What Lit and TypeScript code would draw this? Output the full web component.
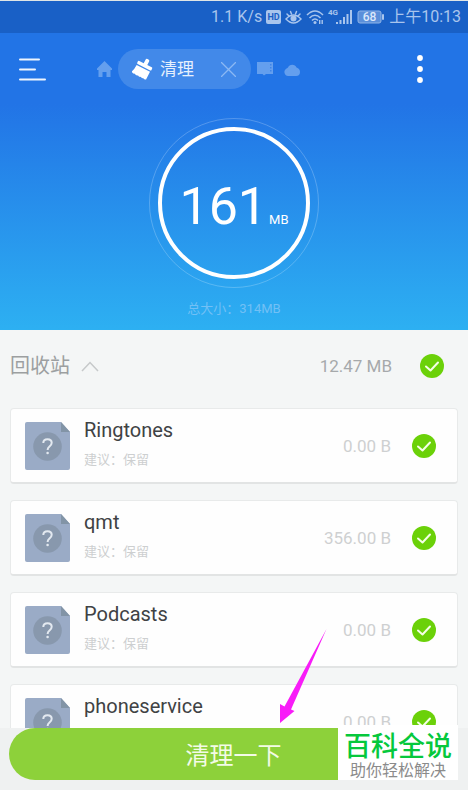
import { LitElement, html, css } from "lit";
import { customElement, property, state } from "lit/decorators.js";

const FONT = css`Roboto, "Noto Sans CJK SC", sans-serif`;

@customElement("check-toggle")
class CheckToggle extends LitElement {
  @property() label = "";

  static styles = css`
    :host {
      display: block;
    }
    .toggle {
      display: grid;
      width: 24px;
      height: 24px;
    }
    .box,
    .tick {
      grid-area: 1 / 1;
      width: 24px;
      height: 24px;
      margin: 0;
    }
    .box {
      appearance: none;
      border-radius: 50%;
      background: #c9cdcf;
    }
    .box:checked {
      background: #6bd109;
    }
    .tick {
      pointer-events: none;
    }
  `;

  render() {
    return html`<label class="toggle">
      <input class="box" type="checkbox" checked aria-label=${this.label} />
      <svg class="tick" viewBox="0 0 24 24" fill="none" stroke="#f4ffe6" stroke-width="2" stroke-linecap="round" stroke-linejoin="round">
        <path d="M6 12.5 L10.5 16.5 L18 8.5" />
      </svg>
    </label>`;
  }
}

@customElement("status-bar")
class StatusBar extends LitElement {
  static styles = css`
    :host {
      display: flex;
      align-items: center;
      justify-content: flex-end;
      gap: 4px;
      height: 32px;
      padding-right: 7px;
      border-top: 1px solid #dfe5e6;
      background: #1960c6;
      color: #a9c5ed;
      font: 16px/20px ${FONT};
      white-space: nowrap;
    }
    .icon {
      display: block;
      flex: none;
      fill: currentColor;
      font: bold 9px/10px ${FONT};
    }
    .load {
      font-size: 12px;
      font-weight: 500;
    }
    .small {
      font-size: 8px;
    }
  `;

  render() {
    return html`
      <span>1.1 K/s</span>
      <svg class="icon" width="15" height="16" viewBox="0 0 15 16">
        <rect y="1" width="15" height="14" rx="2" />
        <text x="7.5" y="11" text-anchor="middle" fill="#1960c6">HD</text>
      </svg>
      <svg class="icon" width="17" height="16" viewBox="0 0 17 16">
        <g fill="none" stroke="currentColor" stroke-width="1.5" stroke-linecap="round">
          <path d="M1 10 Q8.500 2 16 10 Q8.500 18 1 10Z" />
          <path d="M2 5 L4 7 M5.500 2.500 L6.500 5 M11.500 2.500 L10.500 5 M15 5 L13 7" />
        </g>
        <circle cx="8.500" cy="9.500" r="3" />
      </svg>
      <svg class="icon" width="18" height="16" viewBox="0 0 18 16">
        <g fill="none" stroke="currentColor" stroke-width="1.600">
          <path d="M1 6 Q9 -2 17 6" />
          <path d="M3.500 9 Q9 3.500 14.500 9" />
          <path d="M6 11.500 Q9 8.500 12 11.500" />
        </g>
        <circle cx="9" cy="13.500" r="1.500" />
        <path d="M13 15V11h1.400v4zM15.500 15V11h1.400v4z" />
      </svg>
      <svg class="icon" width="25" height="18" viewBox="0 0 25 18">
        <text class="small" x="0" y="7">4G</text>
        <path d="M8 14h2v2h-2zM11.500 12h2v4h-2zM15 9h2v7h-2zM18.500 6h2v10h-2zM22 2h2v14h-2z" />
      </svg>
      <svg class="icon" width="28" height="14" viewBox="0 0 28 14">
        <rect x="1" y="1" width="23" height="12" rx="2" fill="#5b8fda" stroke="#8fb4e8" />
        <rect x="25" y="4" width="2" height="6" rx="1" />
        <text class="load" x="12.500" y="11.300" text-anchor="middle" fill="#dce8fa">68</text>
      </svg>
      <span>上午10:13</span>
    `;
  }
}

@customElement("trash-item")
class TrashItem extends LitElement {
  @property() name = "";
  @property() size = "";

  static styles = css`
    :host {
      display: flex;
      align-items: center;
      box-sizing: border-box;
      height: 76px;
      flex: none;
      padding: 0 21px 0 14px;
      border: 1px solid #e8eaea;
      border-bottom: 2px solid #e2e4e4;
      border-radius: 4px;
      background: #fefefe;
      font-family: ${FONT};
    }
    .file {
      flex: none;
      display: block;
    }
    .info {
      flex: 1;
      min-width: 0;
      margin-left: 14px;
    }
    .name {
      margin: 0;
      color: #404244;
      font-size: 20px;
      font-weight: 400;
      line-height: 24px;
    }
    .advice {
      margin: 8px 0 4px;
      color: #cdcfd0;
      font-size: 13px;
      line-height: 20px;
    }
    .size {
      margin-right: 21px;
      color: #ced0d1;
      font-size: 17px;
      line-height: 24px;
    }
  `;

  render() {
    return html`
      <svg class="file" width="45" height="48" viewBox="0 0 45 48">
        <path d="M2 0H36L45 10V46a2 2 0 0 1-2 2H2a2 2 0 0 1-2-2V2a2 2 0 0 1 2-2Z" fill="#9aabc6" />
        <path d="M36 0L45 10H36Z" fill="#8294a6" />
        <circle cx="22.500" cy="24.500" r="14.300" fill="#8898ad" />
        <path d="M18.300 21 Q18.300 17.300 22.500 17.300 Q26.700 17.300 26.700 20.800 Q26.700 22.800 24.500 24.500 Q22.600 26 22.600 28" fill="none" stroke="#e3e9f0" stroke-width="2" />
        <circle cx="22.600" cy="31" r="1.300" fill="#e3e9f0" />
      </svg>
      <div class="info">
        <h2 class="name">${this.name}</h2>
        <p class="advice">建议：保留</p>
      </div>
      <span class="size">${this.size}</span>
      <check-toggle label=${this.name}></check-toggle>
    `;
  }
}

@customElement("app-root")
class AppRoot extends LitElement {
  @state() private items = [
    { name: "Ringtones", size: "0.00 B" },
    { name: "qmt", size: "356.00 B" },
    { name: "Podcasts", size: "0.00 B" },
    { name: "phoneservice", size: "0.00 B" },
  ];

  static styles = css`
    :host {
      display: flex;
      flex-direction: column;
      height: 100vh;
      overflow: hidden;
      background: #f4f6f6;
      font-family: ${FONT};
    }
    button {
      padding: 0;
      border: 0;
      background: none;
      color: inherit;
      font: inherit;
    }
    svg {
      display: block;
    }
    .hero {
      flex: none;
      background: linear-gradient(#2274e6 0, #2274e6 24%, #2db0f2 100%);
      color: #fff;
      padding-bottom: 11px;
    }
    .bar {
      display: grid;
      grid-template-columns: 97px 1fr auto;
      align-items: center;
      height: 72px;
      padding-right: 44px;
    }
    .menu {
      justify-self: start;
      margin-left: 18px;
    }
    .tabs {
      display: flex;
      align-items: center;
      gap: 6px;
      color: #649fee;
    }
    .pill {
      display: flex;
      align-items: center;
      box-sizing: border-box;
      width: 133px;
      height: 40px;
      padding: 0 15px 0 14px;
      border-radius: 20px;
      background: #4289e9;
    }
    .pill-name {
      flex: 1;
      margin-left: 6px;
      color: #e6f0fd;
      font-size: 17px;
      line-height: 24px;
    }
    .cloud {
      margin-left: 4px;
    }
    .halo {
      display: grid;
      place-items: center;
      box-sizing: border-box;
      width: 170px;
      height: 170px;
      margin: 13px auto 11px;
      border: 1px solid #ffffff38;
      border-radius: 50%;
    }
    .ring {
      display: flex;
      align-items: baseline;
      justify-content: center;
      gap: 2px;
      box-sizing: border-box;
      width: 152px;
      height: 152px;
      padding-top: 4px;
      border: 4px solid #fff;
      border-radius: 50%;
      line-height: 144px;
    }
    .amount {
      font-size: 52px;
    }
    .unit {
      font-size: 13px;
    }
    .total {
      margin: 0;
      color: #72c0f5;
      font-size: 13px;
      line-height: 20px;
      text-align: center;
    }
    .list {
      flex: 1;
      min-height: 0;
      display: flex;
      flex-direction: column;
      gap: 16px;
      overflow: hidden;
      padding: 0 10px;
    }
    .head {
      flex: none;
      display: flex;
      align-items: center;
      box-sizing: border-box;
      height: 62px;
      padding: 10px 14px 0 0;
      color: #9c9fa1;
    }
    .title {
      margin: 0;
      font-size: 20px;
      font-weight: 400;
      line-height: 28px;
    }
    .fold {
      flex: 1;
      margin-left: 10px;
    }
    .sum {
      margin-right: 28px;
      font-size: 17px;
      line-height: 24px;
      color: #a6a9ab;
    }
    .foot {
      position: relative;
      flex: none;
      padding: 0 10px 10px 9px;
      background: #eff1f1;
    }
    .foot .clean {
      display: block;
      box-sizing: border-box;
      width: 100%;
      height: 52px;
      padding-top: 4px;
      border-radius: 26px;
      background: #8dd13a;
      color: #f3fbe6;
      font-size: 24px;
      line-height: 48px;
    }
    .arrow {
      position: absolute;
      left: 280px;
      bottom: 66px;
      pointer-events: none;
    }
    .mark {
      position: absolute;
      right: 10px;
      bottom: 10px;
      box-sizing: border-box;
      width: 120px;
      height: 55px;
      padding-top: 6px;
      background: #fff;
      text-align: center;
      white-space: nowrap;
    }
    .mark-name {
      display: block;
      color: #06c83c;
      font-size: 27px;
      font-weight: 500;
      line-height: 32px;
    }
    .mark-line {
      display: block;
      color: #8b8b8b;
      font-size: 16px;
      line-height: 16px;
    }
  `;

  render() {
    return html`
      <status-bar></status-bar>
      <header class="hero">
        <div class="bar">
          <button class="menu" aria-label="菜单">
            <svg width="28" height="24" viewBox="0 0 28 24" stroke="#eef5fe" stroke-width="2" stroke-linecap="round">
              <path d="M2 2.500H21M2 12.500H17M2 22.500H27" />
            </svg>
          </button>
          <nav class="tabs">
            <svg width="15" height="16" viewBox="0 0 15 16" fill="currentColor">
              <path d="M7.500 0L0 7.500V9H1.500V16H5.500V11H9.500V16H13.500V9H15V7.500Z" />
            </svg>
            <div class="pill">
              <svg width="22" height="22" viewBox="0 0 22 22">
                <g transform="rotate(27 11 11)" fill="#fff">
                  <rect x="9" y="0" width="4" height="7" rx="1.500" />
                  <rect x="3" y="5.500" width="16" height="3.500" rx="1" />
                  <path d="M3.500 10.300H18.500V19Q17 20.200 15.500 19Q14 20.200 12.500 19Q11 20.200 9.500 19Q7.500 20.500 6 19Q4 20 2 18.500Q3.500 15 3.500 10.300Z" />
                </g>
              </svg>
              <span class="pill-name">清理</span>
              <button aria-label="关闭">
                <svg width="15" height="15" viewBox="0 0 15 15" stroke="#8bb8f3" stroke-width="1.300">
                  <path d="M0 0L15 15M15 0L0 15" />
                </svg>
              </button>
            </div>
            <svg width="17" height="14" viewBox="0 0 17 14" fill="currentColor">
              <path d="M0 0H16V12H9L7 13.500L5.500 12H0Z" />
              <path d="M13 2h1.500v1.500H13zM13 5h1.500v1.500H13zM13 8h1.500v1.500H13z" fill="#3d85e9" />
            </svg>
            <svg class="cloud" width="16" height="13" viewBox="0 0 16 13" fill="currentColor">
              <path d="M4 13A4 4 0 0 1 2.500 5.500Q3.500 4.800 4 4.500A4.600 4.600 0 0 1 12.500 4.500Q16 5.500 16 9A4 4 0 0 1 12 13Z" />
            </svg>
          </nav>
          <button aria-label="更多">
            <svg width="8" height="28" viewBox="0 0 8 28" fill="#fff">
              <circle cx="4" cy="3" r="2.900" />
              <circle cx="4" cy="14" r="2.900" />
              <circle cx="4" cy="25" r="2.900" />
            </svg>
          </button>
        </div>
        <div class="halo">
          <div class="ring"><span class="amount">161</span><span class="unit">MB</span></div>
        </div>
        <p class="total">总大小：314MB</p>
      </header>
      <main class="list">
        <div class="head">
          <h1 class="title">回收站</h1>
          <div class="fold">
            <svg width="20" height="12" viewBox="0 0 20 12" fill="none" stroke="#c6c9ca" stroke-width="1.500">
              <path d="M2 11L10 2.500L18 11" />
            </svg>
          </div>
          <span class="sum">12.47 MB</span>
          <check-toggle label="回收站"></check-toggle>
        </div>
        ${this.items.map((i) => html`<trash-item name=${i.name} size=${i.size}></trash-item>`)}
      </main>
      <footer class="foot">
        <button class="clean">清理一下</button>
        <svg class="arrow" width="48" height="96" viewBox="0 0 48 96" fill="#f81cf8">
          <path d="M46.500 1L11 81.500L14.500 83L0 95V76L4.500 78.500Z" />
        </svg>
        <div class="mark">
          <span class="mark-name">百科全说</span>
          <span class="mark-line">助你轻松解决</span>
        </div>
      </footer>
    `;
  }
}
